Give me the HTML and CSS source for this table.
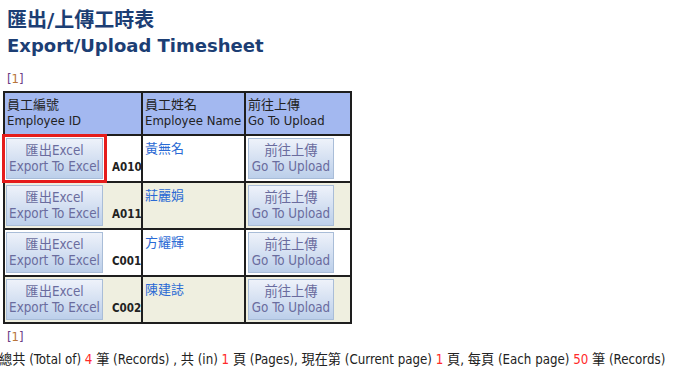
FILE: index.html
```html
<!DOCTYPE html>
<html>
<head>
<meta charset="utf-8">
<link rel="stylesheet" href="styles.css">
</head>
<body>
<div class="page">
  <h1 class="title"><span class="zh">匯出/上傳工時表</span><br>Export/Upload Timesheet</h1>
  <div class="pager">[<span class="cur">1</span>]</div>
  <table class="grid">
    <colgroup><col class="c1"><col class="c2"><col class="c3"></colgroup>
    <tr class="head">
      <th>員工編號<br>Employee ID</th>
      <th>員工姓名<br>Employee Name</th>
      <th>前往上傳<br>Go To Upload</th>
    </tr>
    <tr class="odd">
      <td class="idcell"><span class="btn wide hl">匯出Excel<br>Export To Excel</span><span class="id">A010</span></td>
      <td><a class="name">黃無名</a></td>
      <td><span class="btn">前往上傳<br>Go To Upload</span></td>
    </tr>
    <tr class="even">
      <td class="idcell"><span class="btn wide">匯出Excel<br>Export To Excel</span><span class="id">A011</span></td>
      <td><a class="name">莊麗娟</a></td>
      <td><span class="btn">前往上傳<br>Go To Upload</span></td>
    </tr>
    <tr class="odd">
      <td class="idcell"><span class="btn wide">匯出Excel<br>Export To Excel</span><span class="id">C001</span></td>
      <td><a class="name">方耀輝</a></td>
      <td><span class="btn">前往上傳<br>Go To Upload</span></td>
    </tr>
    <tr class="even">
      <td class="idcell"><span class="btn wide">匯出Excel<br>Export To Excel</span><span class="id">C002</span></td>
      <td><a class="name">陳建誌</a></td>
      <td><span class="btn">前往上傳<br>Go To Upload</span></td>
    </tr>
  </table>
  <div class="pager bottom">[<span class="cur">1</span>]</div>
  <div class="summary">總共 (Total of) <span class="num">4</span> 筆 (Records) , 共 (in) <span class="num">1</span> 頁 (Pages), 現在第 (Current page) <span class="num">1</span> 頁, 每頁 (Each page) <span class="num">50</span> 筆 (Records)</div>
</div>
</body>
</html>
```

FILE: styles.css
```css
html, body {
  margin: 0;
  padding: 0;
  background: #ffffff;
}
.page {
  font-family: "DejaVu Sans Condensed", "DejaVu Sans", "Noto Sans CJK TC", sans-serif;
  font-size: 13px;
  color: #222;
}
.title {
  margin: 0;
  padding: 8px 0 0 7px;
  font-family: "DejaVu Sans", "Noto Sans CJK TC", sans-serif;
  font-weight: bold;
  font-size: 18px;
  line-height: 25px;
  color: #1c3e74;
}
.title .zh {
  font-size: 20px;
}
.pager {
  padding: 13px 0 0 7px;
  line-height: 16px;
  color: #6a3c86;
}
.pager .cur {
  color: #b8743a;
}
.grid {
  margin: 4px 0 0 3px;
  border-collapse: collapse;
  table-layout: fixed;
  width: 347px;
  border: 2px solid #1e1e1e;
}
col.c1 { width: 138px; }
col.c2 { width: 103px; }
col.c3 { width: 106px; }
.grid th, .grid td {
  border: 2px solid #1e1e1e;
  padding: 2px 1px 2px 1px;
  text-align: left;
  vertical-align: top;
  line-height: 16px;
  white-space: nowrap;
  overflow: visible;
}
.grid th {
  background: #a3b8f0;
  font-weight: normal;
  color: #222;
  padding: 4px 1px 5px 2px;
}
.odd td { background: #ffffff; }
.even td { background: #efefe0; }
.btn {
  display: inline-block;
  box-sizing: border-box;
  width: 86px;
  margin-left: 1px;
  padding: 4px 0 3px;
  text-align: center;
  font-size: 13.3px;
  line-height: 16px;
  color: #6a6c9e;
  background: linear-gradient(#eef2fa, #bccfea);
  border: 1px solid #a9bdd8;
}
.btn.wide { width: 97px; margin-left: 0; }
.hl {
  outline: 3px solid #e51c1c;
  outline-offset: 1px;
}
.id {
  margin-left: 9px;
  font-size: 11.5px;
  font-weight: bold;
  color: #222;
}
.name {
  display: inline-block;
  margin: 3px 0 0 1px;
  color: #2a6ad4;
  font-size: 13px;
}
.pager.bottom {
  padding-top: 5px;
}
.summary {
  padding-top: 7px;
  margin-left: -1px;
  font-size: 13.2px;
  line-height: 16px;
  white-space: nowrap;
}
.summary .num {
  color: #ff2a2a;
}
```
